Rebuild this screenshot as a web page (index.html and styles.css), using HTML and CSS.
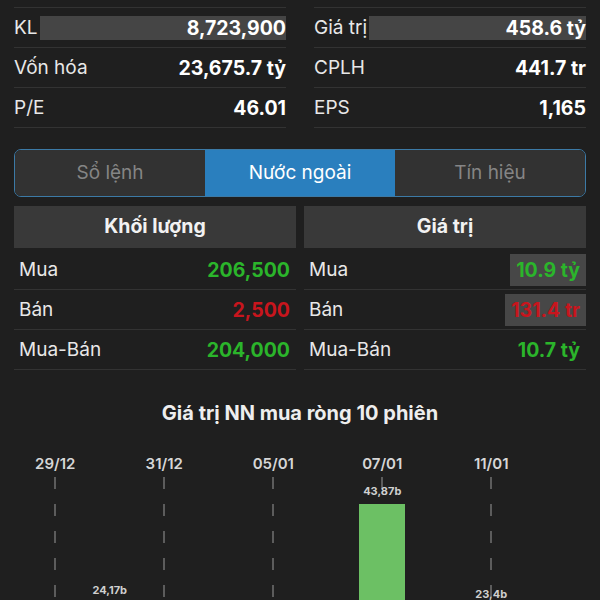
FILE: index.html
```html
<!DOCTYPE html>
<html lang="vi">
<head>
    <meta charset="UTF-8">
    <meta name="viewport" content="width=device-width, initial-scale=1.0">
    <title>Nước ngoài</title>
    <link rel="stylesheet" href="styles.css">
</head>
<body>
    <div class="stats">
        <div class="stats-col">
            <div class="stat-row">
                <span class="stat-label">KL</span>
                <span class="stat-value highlight">8,723,900</span>
            </div>
            <div class="stat-row">
                <span class="stat-label">Vốn hóa</span>
                <span class="stat-value">23,675.7 tỷ</span>
            </div>
            <div class="stat-row">
                <span class="stat-label">P/E</span>
                <span class="stat-value">46.01</span>
            </div>
        </div>
        <div class="stats-col">
            <div class="stat-row">
                <span class="stat-label">Giá trị</span>
                <span class="stat-value highlight">458.6 tỷ</span>
            </div>
            <div class="stat-row">
                <span class="stat-label">CPLH</span>
                <span class="stat-value">441.7 tr</span>
            </div>
            <div class="stat-row">
                <span class="stat-label">EPS</span>
                <span class="stat-value">1,165</span>
            </div>
        </div>
    </div>

    <div class="tabs">
        <div class="tab">Sổ lệnh</div>
        <div class="tab active">Nước ngoài</div>
        <div class="tab">Tín hiệu</div>
    </div>

    <div class="foreign">
        <div class="foreign-col">
            <div class="foreign-head">Khối lượng</div>
            <div class="foreign-row">
                <span>Mua</span>
                <span class="num up">206,500</span>
            </div>
            <div class="foreign-row">
                <span>Bán</span>
                <span class="num down">2,500</span>
            </div>
            <div class="foreign-row">
                <span>Mua-Bán</span>
                <span class="num up">204,000</span>
            </div>
        </div>
        <div class="foreign-col">
            <div class="foreign-head">Giá trị</div>
            <div class="foreign-row">
                <span>Mua</span>
                <span class="num up boxed">10.9 tỷ</span>
            </div>
            <div class="foreign-row">
                <span>Bán</span>
                <span class="num down boxed">131.4 tr</span>
            </div>
            <div class="foreign-row">
                <span>Mua-Bán</span>
                <span class="num up">10.7 tỷ</span>
            </div>
        </div>
    </div>

    <div class="chart">
        <div class="chart-title">Giá trị NN mua ròng 10 phiên</div>
        <div class="chart-body" id="chart"></div>
    </div>

    <script>
        // 10 sessions, label every other one
        const sessions = [
            { date: '29/12', value: null },
            { date: '30/12', value: 24.17 },
            { date: '31/12', value: null },
            { date: '04/01', value: null },
            { date: '05/01', value: null },
            { date: '06/01', value: null },
            { date: '07/01', value: 43.87 },
            { date: '08/01', value: null },
            { date: '11/01', value: 23.4 },
            { date: '12/01', value: null }
        ];
        const pxPerUnit = 5.03;
        const chart = document.getElementById('chart');

        sessions.forEach((s, i) => {
            const slot = document.createElement('div');
            slot.className = 'slot';

            const date = document.createElement('div');
            date.className = 'slot-date';
            date.textContent = i % 2 === 0 ? s.date : '';
            slot.appendChild(date);

            const plot = document.createElement('div');
            plot.className = 'slot-plot' + (i % 2 === 0 ? ' dashed' : '');

            if (s.value !== null) {
                const label = document.createElement('div');
                label.className = 'bar-label';
                label.textContent = s.value.toString().replace('.', ',') + 'b';
                plot.appendChild(label);

                const bar = document.createElement('div');
                bar.className = 'bar';
                bar.style.height = Math.round(s.value * pxPerUnit) + 'px';
                plot.appendChild(bar);
            }

            slot.appendChild(plot);
            chart.appendChild(slot);
        });
    </script>
</body>
</html>
```

FILE: styles.css
```css
body {
    margin: 0;
    width: 600px;
    height: 600px;
    overflow: hidden;
    background-color: #1f1f1f;
    color: #f2f2f2;
    font-family: Inter, "Liberation Sans", sans-serif;
    font-size: 19px;
}

/* top stats */
.stats {
    display: grid;
    grid-template-columns: 1fr 1fr;
    column-gap: 28px;
    padding: 7px 14px 0;
}
.stats-col {
    border-top: 1px solid #333;
}
.stat-row {
    display: flex;
    align-items: center;
    height: 39px;
    border-bottom: 1px solid #333;
}
.stat-label {
    color: #e8e8e8;
    padding-right: 2px;
}
.stat-value {
    flex: 1;
    text-align: right;
    font-size: 19.5px;
    font-weight: 700;
    color: #fff;
}
.stat-value.highlight {
    height: 24px;
    line-height: 24px;
    background-color: #454545;
}

/* tabs */
.tabs {
    display: grid;
    grid-template-columns: repeat(3, 1fr);
    margin: 21px 14px 0;
    height: 46px;
    border: 1px solid #3c7aa6;
    border-radius: 7px;
    overflow: hidden;
}
.tab {
    display: flex;
    align-items: center;
    justify-content: center;
    padding-bottom: 2px;
    background-color: #323232;
    color: #858585;
}
.tab.active {
    background-color: #2a7fbe;
    color: #fff;
}

/* foreign table */
.foreign {
    display: grid;
    grid-template-columns: 1fr 1fr;
    column-gap: 8px;
    margin: 9px 14px 0;
}
.foreign-head {
    height: 42px;
    line-height: 40px;
    text-align: center;
    font-size: 19.5px;
    font-weight: 700;
    background-color: #393939;
    margin-bottom: 2px;
}
.foreign-row {
    display: flex;
    align-items: center;
    justify-content: space-between;
    height: 39px;
    padding-left: 5px;
    border-bottom: 1px solid #333;
    color: #e8e8e8;
}
.num {
    font-size: 19.5px;
    font-weight: 700;
    padding: 0 6px;
}
.num.up {
    color: #2bb52b;
}
.num.down {
    color: #c8151d;
}
.num.boxed {
    height: 32px;
    line-height: 32px;
    background-color: #474747;
}

/* chart */
.chart-title {
    margin-top: 31px;
    text-align: center;
    font-size: 20px;
    font-weight: 700;
    line-height: 24px;
    color: #eee;
}
.chart-body {
    display: grid;
    grid-template-columns: repeat(10, 1fr);
    margin: 29px 27px 0 28px;
}
.slot {
    display: flex;
    flex-direction: column;
    align-items: center;
}
.slot-date {
    height: 20px;
    line-height: 20px;
    font-size: 15px;
    font-weight: 600;
    color: #d6d6d6;
}
.slot-plot {
    align-self: stretch;
    display: flex;
    flex-direction: column;
    justify-content: flex-end;
    align-items: center;
    height: 248px;
    margin-top: 3px;
}
.slot-plot.dashed {
    background: repeating-linear-gradient(to bottom, #5c5c5c 0 12px, transparent 12px 27px) center top / 2px 100% no-repeat;
}
.bar-label {
    font-size: 11px;
    font-weight: 700;
    line-height: 11px;
    color: #cfcfcf;
    margin-bottom: 7px;
}
.bar {
    width: 46px;
    background-color: #6cc064;
}
```
